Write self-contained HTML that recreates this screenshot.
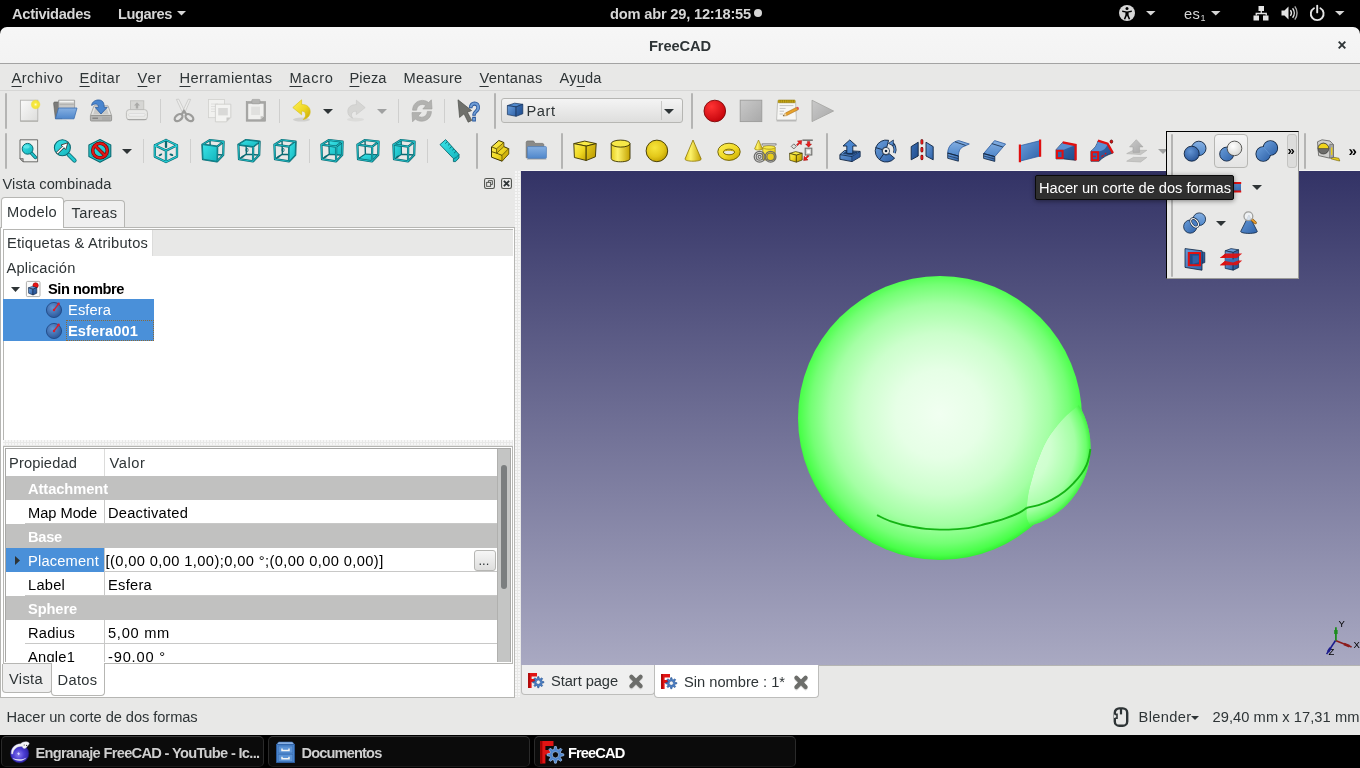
<!DOCTYPE html>
<html lang="es">
<head>
<meta charset="utf-8">
<title>FreeCAD</title>
<style>
*{box-sizing:border-box;margin:0;padding:0}
html,body{width:1360px;height:768px;overflow:hidden;background:#e8e8e7;font-family:"Liberation Sans","DejaVu Sans",sans-serif;font-size:14.67px;color:#2e3436}
.a{position:absolute}
.t{position:absolute;white-space:nowrap;line-height:20px;height:20px}
.b{font-weight:bold}
.w{color:#fff}
u{text-decoration:underline;text-underline-offset:3px;text-decoration-thickness:1px}
svg{position:absolute;overflow:visible}
#topbar{left:0;top:0;width:1360px;height:27px;background:#000;color:#d6d6d6}
#titlebar{left:0;top:27px;width:1360px;height:37px;background:linear-gradient(#f6f6f6,#f3f3f3);border-radius:7px 7px 0 0;border-bottom:1px solid #a3a3a3}
#menubar{left:0;top:64px;width:1360px;height:27px;background:#e8e8e7;border-bottom:1px solid #d6d6d5}
#view3d{left:521px;top:171px;width:839px;height:494px;background:linear-gradient(#333366,#a9a9c2);overflow:hidden}
#taskbar{left:0;top:735px;width:1360px;height:33px;background:#000}
.hdl{position:absolute;width:2px;background:#b4b4b3;border-radius:1px}
.sep{position:absolute;width:1px;background:#cfcfce}
.task{position:absolute;top:1px;height:31px;background:#0b0b0b;border:1px solid #2a2a2a;border-top-color:#3c3c3c;border-bottom-color:#1c1c1c;border-radius:5px}
.dots{background-color:#e8e8e7;background-image:radial-gradient(circle at 1px 1px,#f6f6f6 0.9px,transparent 1.1px);background-size:3px 3px}
#root{position:absolute;left:0;top:0;width:1360px;height:768px;overflow:hidden;will-change:transform}
</style>
</head>
<body>
<div id="root">
<svg width="0" height="0" style="left:0;top:0"><defs>
<linearGradient id="gY" x1="0" y1="0" x2="1" y2="1"><stop offset="0" stop-color="#fdf05a"/><stop offset="0.55" stop-color="#efd823"/><stop offset="1" stop-color="#c6a400"/></linearGradient>
<linearGradient id="gYd" x1="0" y1="0" x2="1" y2="1"><stop offset="0" stop-color="#e8cf1f"/><stop offset="1" stop-color="#b89600"/></linearGradient>
<linearGradient id="gYh" x1="0" y1="0" x2="1" y2="0"><stop offset="0" stop-color="#e6ce20"/><stop offset="0.35" stop-color="#fdf26a"/><stop offset="1" stop-color="#c4a200"/></linearGradient>
<radialGradient id="gYs" cx="0.4" cy="0.35" r="0.7"><stop offset="0" stop-color="#f7e53c"/><stop offset="0.6" stop-color="#e3c81a"/><stop offset="1" stop-color="#bf9e00"/></radialGradient>
<linearGradient id="gB" x1="0" y1="0" x2="1" y2="1"><stop offset="0" stop-color="#6a9edb"/><stop offset="1" stop-color="#2f62a8"/></linearGradient>
<linearGradient id="gBd" x1="0" y1="0" x2="1" y2="1"><stop offset="0" stop-color="#3b70b6"/><stop offset="1" stop-color="#1f4b8a"/></linearGradient>
<linearGradient id="gBl" x1="0" y1="0" x2="0" y2="1"><stop offset="0" stop-color="#86b0e2"/><stop offset="1" stop-color="#4f87cb"/></linearGradient>
<radialGradient id="gBs" cx="0.4" cy="0.35" r="0.75"><stop offset="0" stop-color="#6395d4"/><stop offset="1" stop-color="#234f92"/></radialGradient>
<linearGradient id="gT" x1="0" y1="0" x2="1" y2="1"><stop offset="0" stop-color="#3be4e8"/><stop offset="1" stop-color="#12b4bc"/></linearGradient>
<linearGradient id="gG" x1="0" y1="0" x2="1" y2="1"><stop offset="0" stop-color="#c9c9c9"/><stop offset="1" stop-color="#a9a9a9"/></linearGradient>
<linearGradient id="gP" x1="0" y1="0" x2="1" y2="1"><stop offset="0" stop-color="#fafafa"/><stop offset="1" stop-color="#dddddb"/></linearGradient>
<radialGradient id="gR" cx="0.35" cy="0.3" r="0.8"><stop offset="0" stop-color="#f33"/><stop offset="1" stop-color="#c00008"/></radialGradient>
<radialGradient id="gW" cx="0.4" cy="0.35" r="0.7"><stop offset="0" stop-color="#fff"/><stop offset="1" stop-color="#d6d6d2"/></radialGradient>
<radialGradient id="gStar" cx="0.5" cy="0.5" r="0.5"><stop offset="0" stop-color="#fffbd0"/><stop offset="0.35" stop-color="#f8ea3a"/><stop offset="0.75" stop-color="#f2e024" stop-opacity="0.85"/><stop offset="1" stop-color="#f2e024" stop-opacity="0"/></radialGradient>
<radialGradient id="gWeb" cx="0.45" cy="0.55" r="0.6"><stop offset="0" stop-color="#8a7df0"/><stop offset="0.5" stop-color="#4a3cd2"/><stop offset="1" stop-color="#2a1f9c"/></radialGradient>
</defs></svg>
<div id="topbar" class="a">
<div class="t b" style="left:12px;top:3.9px;letter-spacing:-0.30px">Actividades</div>
<div class="t b" style="left:118px;top:3.9px;letter-spacing:-0.43px">Lugares</div>
<svg style="left:176.9px;top:11.45px" width="9" height="4.5" viewBox="0 0 9 4.5"><path d="M0 0H9L4.5 4.5Z" fill="#d6d6d6"/></svg>
<div class="t b" style="left:610px;top:3.9px;letter-spacing:-0.20px">dom abr 29, 12:18:55</div>
<div class="a" style="left:754px;top:9px;width:8px;height:8px;border-radius:4px;background:#d6d6d6"></div>
<svg style="left:1119px;top:5px" width="16" height="16" viewBox="0 0 16 16"><circle cx="8" cy="8" r="8" fill="#d6d6d6"/>
<circle cx="8" cy="3.600" r="1.500" fill="#000"/>
<path d="M3.200 5.600L8 6.400L12.800 5.600V7L9.600 7.600V10L11.200 14L9.800 14.400L8 10.600L6.200 14.400L4.800 14L6.400 10V7.600L3.200 7Z" fill="#000"/></svg>
<svg style="left:1145.65px;top:11.1px" width="9.5" height="4.6" viewBox="0 0 9.5 4.6"><path d="M0 0H9.5L4.75 4.6Z" fill="#d6d6d6"/></svg>
<div class="t" style="left:1183.9px;top:3.9px;letter-spacing:0.50px">es<span style="font-size:9px;position:relative;top:2px">1</span></div>
<svg style="left:1211.25px;top:11.1px" width="9.5" height="4.6" viewBox="0 0 9.5 4.6"><path d="M0 0H9.5L4.75 4.6Z" fill="#d6d6d6"/></svg>
<svg style="left:1252.5px;top:5px" width="16" height="16" viewBox="0 0 16 16"><rect x="5.500" y="1" width="5.500" height="5" fill="#e4e4e4"/><rect x=".5" y="10.500" width="5.500" height="5" fill="#e4e4e4"/><rect x="10" y="10.500" width="5.500" height="5" fill="#e4e4e4"/>
<path d="M8.250 6V8.500M3.250 10.500V8.500H13.250V10.500" fill="none" stroke="#e4e4e4" stroke-width="1.300"/></svg>
<svg style="left:1280.5px;top:5px" width="16" height="16" viewBox="0 0 16 16"><path d="M.5 5.500H3.500L7.500 1.500V14.500L3.500 10.500H.5Z" fill="#e4e4e4"/>
<path d="M9.400 5.200C10.600 6.800 10.600 9.200 9.400 10.800" fill="none" stroke="#e4e4e4" stroke-width="1.400"/>
<path d="M11.600 3.200C13.800 6 13.800 10 11.600 12.800" fill="none" stroke="#e4e4e4" stroke-width="1.400"/>
<path d="M13.800 1.400C16.800 5.200 16.800 10.800 13.800 14.600" fill="none" stroke="#e4e4e4" stroke-width="1.400" opacity=".75"/></svg>
<svg style="left:1308.5px;top:5px" width="16" height="16" viewBox="0 0 16 16"><path d="M5 3.200A6.400 6.400 0 1 0 11.400 3.200" fill="none" stroke="#e4e4e4" stroke-width="1.900" stroke-linecap="round"/>
<path d="M8.200 .8V7.400" stroke="#e4e4e4" stroke-width="1.900" stroke-linecap="round"/></svg>
<svg style="left:1335.25px;top:11.1px" width="9.5" height="4.6" viewBox="0 0 9.5 4.6"><path d="M0 0H9.5L4.75 4.6Z" fill="#d6d6d6"/></svg>
</div>
<div class="a" style="left:0;top:27px;width:1360px;height:10px;background:#000"></div>
<div id="titlebar" class="a"></div>
<div class="t b" style="left:649px;top:35.9px;letter-spacing:-0.10px">FreeCAD</div>
<svg style="left:1338px;top:41px" width="8" height="8" viewBox="0 0 8 8"><path d="M0.7 0.7L7.3 7.3M7.3 0.7L0.7 7.3" stroke="#2e3436" stroke-width="1.9"/></svg>
<div id="menubar" class="a"></div>
<div class="t" style="left:11.5px;top:68.2px;letter-spacing:0.44px"><u>A</u>rchivo</div>
<div class="t" style="left:79.5px;top:68.2px;letter-spacing:0.45px"><u>E</u>ditar</div>
<div class="t" style="left:137.5px;top:68.2px;letter-spacing:0.90px"><u>V</u>er</div>
<div class="t" style="left:179.5px;top:68.2px;letter-spacing:0.42px"><u>H</u>erramientas</div>
<div class="t" style="left:289.5px;top:68.2px;letter-spacing:0.65px"><u>M</u>acro</div>
<div class="t" style="left:349.5px;top:68.2px;letter-spacing:0.07px"><u>P</u>ieza</div>
<div class="t" style="left:403.5px;top:68.2px;letter-spacing:0.28px">Measure</div>
<div class="t" style="left:479.5px;top:68.2px;letter-spacing:0.23px"><u>V</u>entanas</div>
<div class="t" style="left:559.5px;top:68.2px;letter-spacing:0.14px">Ay<u>u</u>da</div>
<div class="hdl" style="left:5px;top:93px;height:36px"></div>
<svg style="left:17px;top:99px" width="24" height="24" viewBox="0 0 24 24"><rect x="3.2" y="21.3" width="17.8" height="1.6" fill="#9c9c9a" opacity=".7"/>
<rect x="3.4" y="1.2" width="17.4" height="20.6" fill="url(#gP)" stroke="#b2b2b0" stroke-width=".9"/>
<circle cx="18.6" cy="5.5" r="5.2" fill="url(#gStar)"/></svg>
<svg style="left:53px;top:99px" width="24" height="24" viewBox="0 0 24 24"><path d="M0.6 4.2L1.2 3H6.2L7.2 4.6H9V19.6H2.4Z" fill="#7c7c7a" stroke="#5a5a58" stroke-width=".6"/>
<path d="M5.6 1.2H21.6V11H5.6Z" fill="#c9c9c7" stroke="#8e8e8c" stroke-width=".7"/>
<path d="M6.4 2.600H20.800" stroke="#f4f4f2" stroke-width="1.600"/><path d="M6.400 5.400H20.800" stroke="#b4b4b2" stroke-width="1.400"/>
<path d="M5.6 9H24L21 19.8H2.4Z" fill="url(#gBl)" stroke="#3a6db0" stroke-width=".8"/></svg>
<svg style="left:89px;top:99px" width="24" height="24" viewBox="0 0 24 24"><path d="M5 6.8H19L22.6 16.6H1.4Z" fill="#e4e4e2" stroke="#9a9a98" stroke-width=".8"/>
<path d="M6.4 8.5H17.6L19.8 15.2H4.2Z" fill="#c9c9c7"/>
<rect x="1.4" y="16.4" width="21.2" height="5.6" rx="1" fill="#b4b4b2" stroke="#8a8a88" stroke-width=".8"/>
<path d="M3.4 19.2H9" stroke="#7a7a78" stroke-width="1.2"/><path d="M14 18V21M16 18V21M18 18V21M20 18V21" stroke="#a0a09e" stroke-width=".8"/>
<path d="M2.6 6.4C3 2.6 6.8 .6 10.4 1C13.6 1.4 15.2 3.6 15.2 8.4H18.2L12 15L6.2 8.4H9.4C9.6 5.6 7.6 3.6 2.6 6.4Z" fill="#4a86cf" stroke="#2a5a9c" stroke-width=".8"/></svg>
<svg style="left:125px;top:99px" width="24" height="24" viewBox="0 0 24 24"><rect x="5.4" y="1.8" width="13.4" height="10" fill="#d6d6d4" stroke="#bcbcba" stroke-width=".8"/>
<path d="M12 3.2L15 6.6H13.2V9.6H10.8V6.6H9Z" fill="#aaaaa8"/>
<rect x="1.4" y="10.6" width="21" height="10.2" rx="3" fill="#e9e9e7" stroke="#b8b8b6" stroke-width=".9"/>
<rect x="3.6" y="14.8" width="16.6" height="2.2" rx="1.1" fill="#f6f6f6" stroke="#c4c4c2" stroke-width=".5"/>
<path d="M2.6 20.6H21.4" stroke="#a4a4a2" stroke-width="1"/></svg>
<svg style="left:172px;top:99px" width="24" height="24" viewBox="0 0 24 24"><path d="M4.4 .4L6.8 .2L13.4 13.6L11 14.6Z" fill="#ececea" stroke="#c2c2c0" stroke-width=".7"/>
<path d="M18.6 .4L16.4 .2L10 13.6L12.4 14.6Z" fill="#ececea" stroke="#c2c2c0" stroke-width=".7"/>
<ellipse cx="6.6" cy="18.6" rx="4.4" ry="2.8" transform="rotate(-38 6.6 18.6)" fill="none" stroke="#9c9c9a" stroke-width="2.3"/>
<ellipse cx="17.4" cy="18.6" rx="4.4" ry="2.8" transform="rotate(38 17.4 18.6)" fill="none" stroke="#9c9c9a" stroke-width="2.3"/>
<path d="M9.8 15.2L12 12L14.2 15.2" fill="none" stroke="#9c9c9a" stroke-width="2.2"/></svg>
<svg style="left:208px;top:99px" width="24" height="24" viewBox="0 0 24 24"><rect x=".5" y=".5" width="16" height="18.2" fill="#f1f1ef" stroke="#d0d0ce" stroke-width=".8"/>
<path d="M3 5H10M3 7.5H10M3 10H10M3 12.500H7" stroke="#dadad8" stroke-width=".8"/>
<path d="M7.400 5.200H22.800V18.500L18.500 22.800H7.400Z" fill="#f3f3f1" stroke="#cacac8" stroke-width=".8"/>
<rect x="10.200" y="9" width="9.600" height="7.400" fill="#d9d9d7"/>
<path d="M22.800 18.500H18.500V22.800Z" fill="#c8c8c6"/></svg>
<svg style="left:244px;top:99px" width="24" height="24" viewBox="0 0 24 24"><rect x="2.200" y="2.600" width="19.400" height="19.600" fill="#a6a6a4" stroke="#9a9a98" stroke-width=".6"/>
<path d="M4.200 4.800H19.600V17.200L16.600 20.200H4.200Z" fill="#f0f0ee"/>
<rect x="7.200" y="7.600" width="8.800" height="8.400" fill="#e0e0de"/>
<path d="M19.600 17.200H16.600V20.200Z" fill="#c4c4c2"/>
<rect x="7.800" y=".4" width="8.200" height="4.400" rx="1" fill="#b4b4b2" stroke="#9a9a98" stroke-width=".6"/></svg>
<svg style="left:289px;top:99px" width="24" height="24" viewBox="0 0 24 24"><ellipse cx="12.500" cy="20.600" rx="8.500" ry="2" fill="#bcbcba" opacity=".55"/>
<path d="M3.800 8.600L12.600 .8V5.400C18.400 5.400 21.200 8.600 21.200 12.600C21.200 16.600 18.600 19.600 14.200 20.600C16.400 18.400 16.800 16.800 16.400 14.800C16 12.800 14.800 12 12.600 12V15.800Z" fill="url(#gY)" stroke="#d4bc10" stroke-width=".6"/></svg>
<svg style="left:344px;top:99px" width="24" height="24" viewBox="0 0 24 24"><ellipse cx="11.500" cy="20.600" rx="8.500" ry="1.800" fill="#cfcfcd" opacity=".5"/>
<path d="M21.200 8.600L12.400 1.200V5.600C6.600 5.600 3.800 8.600 3.800 12.400C3.800 15.600 5.600 18 8.800 19.200C7.400 17.400 7.200 16 7.800 14.400C8.400 12.800 10 12.200 12.400 12.200V15.600Z" fill="#d6d6d4" stroke="#c6c6c4" stroke-width=".6"/></svg>
<svg style="left:410px;top:99px" width="24" height="24" viewBox="0 0 24 24"><path d="M2.600 11.200C2.600 5.400 7 1.400 12.400 1.400C15 1.400 17 2.200 18.600 3.600L21.400 .8L22 10H12.800L15.800 6.600C14.800 5.800 13.800 5.400 12.400 5.400C9 5.400 6.800 7.800 6.600 11.200Z" fill="#b2b2b0" stroke="#9e9e9c" stroke-width=".6"/>
<path d="M21.400 12.400C21.400 18.200 17 22.200 11.600 22.200C9 22.200 7 21.400 5.400 20L2.600 22.800L2 13.600H11.200L8.200 17C9.200 17.800 10.200 18.200 11.600 18.200C15 18.200 17.200 15.800 17.400 12.400Z" fill="#b2b2b0" stroke="#9e9e9c" stroke-width=".6"/></svg>
<svg style="left:457px;top:99px" width="24" height="24" viewBox="0 0 24 24"><path d="M1 .8L2.600 18.400L7 14.800L11.200 23.200L14.800 21.400L10.400 13.200L14.600 11.600Z" fill="#6f706c" stroke="#4e4f4b" stroke-width=".7"/>
<text x="11.200" y="21.800" font-family="Liberation Sans,sans-serif" font-weight="bold" font-size="28" fill="#6f9dd6" stroke="#2c5a9e" stroke-width="1.100" textLength="12.500" lengthAdjust="spacingAndGlyphs">?</text></svg>
<div class="sep" style="left:160px;top:99px;height:24px"></div>
<div class="sep" style="left:279px;top:99px;height:24px"></div>
<div class="sep" style="left:398px;top:99px;height:24px"></div>
<div class="sep" style="left:444px;top:99px;height:24px"></div>
<svg style="left:323px;top:109px" width="10" height="5" viewBox="0 0 10 5"><path d="M0 0H10L5 5Z" fill="#2e3436"/></svg>
<svg style="left:377px;top:109px" width="10" height="5" viewBox="0 0 10 5"><path d="M0 0H10L5 5Z" fill="#a0a1a1"/></svg>
<div class="hdl" style="left:494px;top:93px;height:36px"></div>
<div class="a" style="left:501px;top:98px;width:182px;height:25px;border:1px solid #b6b6b3;border-radius:3px;background:linear-gradient(#f4f4f4,#dededd)"></div>
<div class="a" style="left:661px;top:101px;width:1px;height:19px;background:#c8c8c6"></div>
<svg style="left:507px;top:102px" width="16" height="16" viewBox="0 0 16 16"><path d="M.4 3.600L7.600 1.200L15.800 2.300L9.100 4.900Z" fill="#4f88cc" stroke="#14305a" stroke-width=".7" stroke-linejoin="round"/>
<path d="M.4 3.600L9.100 4.900V14.300L.4 12.600Z" fill="url(#gB)" stroke="#14305a" stroke-width=".7" stroke-linejoin="round"/>
<path d="M9.100 4.900L15.800 2.300V11.800L9.100 14.300Z" fill="url(#gBd)" stroke="#14305a" stroke-width=".7" stroke-linejoin="round"/></svg>
<div class="t" style="left:526.5px;top:100.9px;letter-spacing:0.53px">Part</div>
<svg style="left:664px;top:109px" width="10" height="5" viewBox="0 0 10 5"><path d="M0 0H10L5 5Z" fill="#2e3436"/></svg>
<div class="hdl" style="left:691px;top:93px;height:36px"></div>
<svg style="left:702px;top:99px" width="24" height="24" viewBox="0 0 24 24"><circle cx="12.800" cy="12" r="10.800" fill="url(#gR)" stroke="#7e0a0a" stroke-width=".9"/></svg>
<svg style="left:739px;top:99px" width="24" height="24" viewBox="0 0 24 24"><rect x="1.200" y="1.200" width="21.600" height="21.400" fill="url(#gG)" stroke="#9c9c9a" stroke-width=".9"/></svg>
<svg style="left:775px;top:99px" width="24" height="24" viewBox="0 0 24 24"><path d="M1.600 21.800H21.400" stroke="#9a9a98" stroke-width="1.200" opacity=".7"/>
<path d="M2.600 3.200H20.600L21.400 21H1.600Z" fill="#f6f6f4" stroke="#b6b6b4" stroke-width=".8"/>
<rect x="3" y="1" width="17.200" height="2.800" rx=".8" fill="#c8a814" stroke="#8f7600" stroke-width=".5"/>
<path d="M5.200 1V3.600M7.400 1V3.600M9.600 1V3.600M11.800 1V3.600M14 1V3.600M16.200 1V3.600M18.400 1V3.600" stroke="#7a6500" stroke-width=".5"/>
<path d="M4.600 6.600H18.400M4.600 9.400H10.600M4.600 12.200H9M4.600 15H8" stroke="#c4c4c2" stroke-width="1"/>
<path d="M8 17L10.400 14L21.400 8.400L23 10.800L11.600 16.600Z" fill="#e8a22a" stroke="#a86a10" stroke-width=".6"/>
<path d="M21.400 8.400L22.800 7.800C23.600 8.200 24 9.200 23.800 10.400L23 10.800Z" fill="#e04a4a"/>
<path d="M8 17L10.400 14L11.600 16.600Z" fill="#e8d4a8"/><path d="M8 17L9 15.800L9.400 16.700Z" fill="#333"/></svg>
<svg style="left:810px;top:99px" width="24" height="24" viewBox="0 0 24 24"><path d="M2 1.200L23.600 12L2 22.600Z" fill="url(#gG)" stroke="#a2a2a0" stroke-width=".8"/></svg>
<div class="hdl" style="left:5px;top:133px;height:36px"></div>
<svg style="left:16px;top:139px" width="24" height="24" viewBox="0 0 24 24"><path d="M4 .8H21.600V22.800H7.200L4 19.600Z" fill="#efefed" stroke="#4c4c4a" stroke-width=".8"/>
<path d="M4 19.600H7.200V22.800Z" fill="#b0b0ae" stroke="#4c4c4a" stroke-width=".6"/>
<path d="M15 13.600L19.400 18.400" stroke="#0a6a72" stroke-width="3.600" stroke-linecap="round"/>
<path d="M15 13.600L19.400 18.400" stroke="#20c3cb" stroke-width="2" stroke-linecap="round"/>
<circle cx="11.600" cy="9.800" r="5.400" fill="url(#gT)" stroke="#0a6a72" stroke-width="1"/>
<ellipse cx="10.600" cy="7.800" rx="3" ry="1.800" fill="#7ff0f2" opacity=".6"/></svg>
<svg style="left:52px;top:139px" width="24" height="24" viewBox="0 0 24 24"><path d="M16.500 15.500L22.500 21.500" stroke="#0a6a72" stroke-width="4.200" stroke-linecap="round"/>
<path d="M16.500 15.500L22.500 21.500" stroke="#22c7cf" stroke-width="2.600" stroke-linecap="round"/>
<circle cx="10.400" cy="8.800" r="8" fill="url(#gT)" stroke="#0a6a72" stroke-width="1.100"/>
<path d="M5 14.200L11.200 8.200L9 6L15.800 3.800L13.800 10.600L11.800 8.600Z" fill="#fff" stroke="#3a3a38" stroke-width=".9" stroke-linejoin="round"/>
<path d="M5 14.200L11.600 7.800" stroke="#3a3a38" stroke-width="2.800"/><path d="M5.200 14L11.800 7.600" stroke="#fff" stroke-width="1.400"/></svg>
<svg style="left:88px;top:139px" width="24" height="24" viewBox="0 0 24 24"><path d="M12 .6L22.800 6V17.600L12 23.200L.9 17.600V6Z" fill="url(#gT)" stroke="#0a6a72" stroke-width="1.100" stroke-linejoin="round"/>
<path d="M12 2.600L20.800 7V16.600L12 21L3 16.600V7Z" fill="none" stroke="#0f8f97" stroke-width=".8"/>
<circle cx="12" cy="11.600" r="7.300" fill="none" stroke="#6a0000" stroke-width="3.400"/>
<path d="M6.800 6.400L17.200 16.800" stroke="#6a0000" stroke-width="3.400"/>
<circle cx="12" cy="11.600" r="7.300" fill="none" stroke="#e01818" stroke-width="2.200"/>
<path d="M6.800 6.400L17.200 16.800" stroke="#e01818" stroke-width="2.200"/></svg>
<svg style="left:154px;top:139px" width="24" height="24" viewBox="0 0 24 24"><g fill="none" stroke-linejoin="round" stroke-linecap="round">
<path d="M12 1L23 6.200V17.600L12 23L.8 17.600V6.200Z M.8 6.200L12 11.600L23 6.200M12 11.600V23M12 1V8" stroke="#0a6a72" stroke-width="2.300"/>
<path d="M12 1L23 6.200V17.600L12 23L.8 17.600V6.200Z M.8 6.200L12 11.600L23 6.200M12 11.600V23" stroke="#25cdd4" stroke-width="1.100"/>
</g>
<ellipse cx="6.400" cy="15.800" rx="2" ry="1" transform="rotate(-28 6.400 15.800)" fill="#0a6a72"/><ellipse cx="17.400" cy="15.800" rx="2" ry="1" transform="rotate(20 17.400 15.800)" fill="#0a6a72"/></svg>
<svg style="left:200px;top:139px" width="24" height="24" viewBox="0 0 24 24"><path d="M10 1L10.4 15.2L23.2 16M10.4 15.2L3 20.2" fill="none" stroke="#0a6a72" stroke-width="1.400" stroke-linejoin="round"/><path d="M2.4 5.6L17.2 7.6L17 22.4L3 20.2ZM2.4 5.6L10 1L23.6 2.6L17.2 7.6M23.6 2.6L23.2 16L17 22.4" fill="none" stroke="#0a6a72" stroke-width="2.200" stroke-linejoin="round"/><path d="M2.4 5.6L17.2 7.6L17 22.4L3 20.2ZM2.4 5.6L10 1L23.6 2.6L17.2 7.6M23.6 2.6L23.2 16L17 22.4" fill="none" stroke="#27ced5" stroke-width=".8" stroke-linejoin="round"/><polygon points="2.4 5.6 17.2 7.6 17 22.4 3 20.2" fill="url(#gT)" stroke="#0a6a72" stroke-width=".8" stroke-linejoin="round"/></svg>
<svg style="left:236px;top:139px" width="24" height="24" viewBox="0 0 24 24"><path d="M10 1L10.4 15.2L23.2 16M10.4 15.2L3 20.2" fill="none" stroke="#0a6a72" stroke-width="1.400" stroke-linejoin="round"/><ellipse cx="6.800" cy="17.600" rx="1.700" ry=".9" transform="rotate(-30 6.800 17.600)" fill="#0a6a72"/><ellipse cx="11" cy="11" rx="1.100" ry="1.800" fill="none" stroke="#0a6a72" stroke-width=".8"/><path d="M2.4 5.6L17.2 7.6L17 22.4L3 20.2ZM2.4 5.6L10 1L23.6 2.6L17.2 7.6M23.6 2.6L23.2 16L17 22.4" fill="none" stroke="#0a6a72" stroke-width="2.200" stroke-linejoin="round"/><path d="M2.4 5.6L17.2 7.6L17 22.4L3 20.2ZM2.4 5.6L10 1L23.6 2.6L17.2 7.6M23.6 2.6L23.2 16L17 22.4" fill="none" stroke="#27ced5" stroke-width=".8" stroke-linejoin="round"/><polygon points="2.4 5.6 10 1 23.6 2.6 17.2 7.6" fill="url(#gT)" stroke="#0a6a72" stroke-width=".8" stroke-linejoin="round"/></svg>
<svg style="left:272px;top:139px" width="24" height="24" viewBox="0 0 24 24"><path d="M10 1L10.4 15.2L23.2 16M10.4 15.2L3 20.2" fill="none" stroke="#0a6a72" stroke-width="1.400" stroke-linejoin="round"/><ellipse cx="6.800" cy="17.600" rx="1.700" ry=".9" transform="rotate(-30 6.800 17.600)" fill="#0a6a72"/><ellipse cx="11" cy="11" rx="1.100" ry="1.800" fill="none" stroke="#0a6a72" stroke-width=".8"/><path d="M2.4 5.6L17.2 7.6L17 22.4L3 20.2ZM2.4 5.6L10 1L23.6 2.6L17.2 7.6M23.6 2.6L23.2 16L17 22.4" fill="none" stroke="#0a6a72" stroke-width="2.200" stroke-linejoin="round"/><path d="M2.4 5.6L17.2 7.6L17 22.4L3 20.2ZM2.4 5.6L10 1L23.6 2.6L17.2 7.6M23.6 2.6L23.2 16L17 22.4" fill="none" stroke="#27ced5" stroke-width=".8" stroke-linejoin="round"/><polygon points="17.2 7.6 23.6 2.6 23.2 16 17 22.4" fill="url(#gT)" stroke="#0a6a72" stroke-width=".8" stroke-linejoin="round"/></svg>
<svg style="left:319px;top:139px" width="24" height="24" viewBox="0 0 24 24"><path d="M10 1L10.4 15.2L23.2 16M10.4 15.2L3 20.2" fill="none" stroke="#0a6a72" stroke-width="1.400" stroke-linejoin="round"/><polygon points="10 1 23.6 2.6 23.2 16 10.4 15.2" fill="url(#gT)" stroke="#0a6a72" stroke-width=".8" stroke-linejoin="round"/><path d="M2.4 5.6L17.2 7.6L17 22.4L3 20.2ZM2.4 5.6L10 1L23.6 2.6L17.2 7.6M23.6 2.6L23.2 16L17 22.4" fill="none" stroke="#0a6a72" stroke-width="2.200" stroke-linejoin="round"/><path d="M2.4 5.6L17.2 7.6L17 22.4L3 20.2ZM2.4 5.6L10 1L23.6 2.6L17.2 7.6M23.6 2.6L23.2 16L17 22.4" fill="none" stroke="#27ced5" stroke-width=".8" stroke-linejoin="round"/><ellipse cx="6.800" cy="17.600" rx="1.700" ry=".9" transform="rotate(-30 6.800 17.600)" fill="#0a6a72"/></svg>
<svg style="left:355px;top:139px" width="24" height="24" viewBox="0 0 24 24"><path d="M10 1L10.4 15.2L23.2 16M10.4 15.2L3 20.2" fill="none" stroke="#0a6a72" stroke-width="1.400" stroke-linejoin="round"/><polygon points="3 20.2 17 22.4 23.2 16 10.4 15.2" fill="url(#gT)" stroke="#0a6a72" stroke-width=".8" stroke-linejoin="round"/><path d="M2.4 5.6L17.2 7.6L17 22.4L3 20.2ZM2.4 5.6L10 1L23.6 2.6L17.2 7.6M23.6 2.6L23.2 16L17 22.4" fill="none" stroke="#0a6a72" stroke-width="2.200" stroke-linejoin="round"/><path d="M2.4 5.6L17.2 7.6L17 22.4L3 20.2ZM2.4 5.6L10 1L23.6 2.6L17.2 7.6M23.6 2.6L23.2 16L17 22.4" fill="none" stroke="#27ced5" stroke-width=".8" stroke-linejoin="round"/></svg>
<svg style="left:391px;top:139px" width="24" height="24" viewBox="0 0 24 24"><path d="M10 1L10.4 15.2L23.2 16M10.4 15.2L3 20.2" fill="none" stroke="#0a6a72" stroke-width="1.400" stroke-linejoin="round"/><polygon points="2.4 5.6 10 1 10.4 15.2 3 20.2" fill="url(#gT)" stroke="#0a6a72" stroke-width=".8" stroke-linejoin="round"/><path d="M2.4 5.6L17.2 7.6L17 22.4L3 20.2ZM2.4 5.6L10 1L23.6 2.6L17.2 7.6M23.6 2.6L23.2 16L17 22.4" fill="none" stroke="#0a6a72" stroke-width="2.200" stroke-linejoin="round"/><path d="M2.4 5.6L17.2 7.6L17 22.4L3 20.2ZM2.4 5.6L10 1L23.6 2.6L17.2 7.6M23.6 2.6L23.2 16L17 22.4" fill="none" stroke="#27ced5" stroke-width=".8" stroke-linejoin="round"/><ellipse cx="6.800" cy="17.600" rx="1.700" ry=".9" transform="rotate(-30 6.800 17.600)" fill="#0a6a72"/></svg>
<svg style="left:438px;top:139px" width="24" height="24" viewBox="0 0 24 24"><path d="M2 5.600L7.600 .6L21 15.400V19L17.600 22.600H15.400V19.600Z" fill="url(#gT)" stroke="#0a6a72" stroke-width=".9" stroke-linejoin="round"/>
<path d="M15.400 19.600C17.400 19.400 19.600 17.600 21 15.400" fill="none" stroke="#0a6a72" stroke-width=".8"/>
<path d="M9.400 2.600L7.200 4.600M11.600 5L10 6.400M13.800 7.400L11.600 9.400M16 9.800L14.400 11.200M18.200 12.200L16 14.200" stroke="#0a6a72" stroke-width=".9"/></svg>
<svg style="left:488px;top:139px" width="24" height="24" viewBox="0 0 24 24"><path d="M3.500 7.900L10.800 1.500L15.800 3.500V7.600L20.700 9.700V14.900L14.100 22.200L3.500 18.200Z" fill="url(#gY)" stroke="#3a3200" stroke-width="1" stroke-linejoin="round"/>
<path d="M3.500 7.900L8.600 9.800L15.800 3.500M8.600 9.800V14.200L3.500 12.600M8.600 14.200L14.100 16.400L20.700 9.700M14.100 16.400V22.200M8.600 14.200L15.800 7.600" fill="none" stroke="#3a3200" stroke-width=".8" stroke-linejoin="round"/>
<path d="M8.600 9.800L15.800 3.500V7.600L8.600 14.200Z" fill="#c9aa08" opacity=".55"/><path d="M14.100 16.400L20.700 9.700V14.900L14.100 22.200Z" fill="#c9aa08" opacity=".55"/></svg>
<svg style="left:523.5px;top:139px" width="24" height="24" viewBox="0 0 24 24"><path d="M2.200 3.400C2.200 2.600 2.800 2 3.600 2H9.600L11 4.400H18.400C19.200 4.400 19.800 5 19.800 5.800V18.800H2.200Z" fill="#8a8a88" stroke="#6e6e6c" stroke-width=".7"/>
<rect x="3.400" y="7.600" width="19" height="11.800" rx=".8" fill="url(#gBl)" stroke="#4a7ab8" stroke-width=".7"/>
<path d="M3 20.200H22.400" stroke="#7a7a78" stroke-width=".8" opacity=".6"/></svg>
<svg style="left:573px;top:139px" width="24" height="24" viewBox="0 0 24 24"><path d="M.8 4.600L11.700 2.100L23.200 4.600L13.200 7.100Z" fill="#f8ea45" stroke="#3a3200" stroke-width=".9" stroke-linejoin="round"/>
<path d="M.8 4.600L13.200 7.100V21.500L1.400 18.500Z" fill="url(#gY)" stroke="#3a3200" stroke-width=".9" stroke-linejoin="round"/>
<path d="M13.200 7.100L23.200 4.600L22.400 17.800L13.200 21.500Z" fill="url(#gYd)" stroke="#3a3200" stroke-width=".9" stroke-linejoin="round"/></svg>
<svg style="left:609px;top:139px" width="24" height="24" viewBox="0 0 24 24"><path d="M2.200 4.600V19.400C2.200 21.400 6.400 22.800 11.600 22.800C16.800 22.800 21 21.400 21 19.400V4.600Z" fill="url(#gYh)" stroke="#3a3200" stroke-width=".9"/>
<ellipse cx="11.600" cy="4.600" rx="9.400" ry="3.500" fill="#f6e848" stroke="#3a3200" stroke-width=".9"/></svg>
<svg style="left:645px;top:139px" width="24" height="24" viewBox="0 0 24 24"><circle cx="11.900" cy="11.900" r="10.800" fill="url(#gYs)" stroke="#3a3200" stroke-width=".9"/></svg>
<svg style="left:681px;top:139px" width="24" height="24" viewBox="0 0 24 24"><path d="M12 1L20.200 20C20.200 21.400 16.600 22.200 12.100 22.200C7.600 22.200 4 21.400 4 20Z" fill="url(#gYh)" stroke="#8a7400" stroke-width=".8" stroke-linejoin="round"/></svg>
<svg style="left:717px;top:139px" width="24" height="24" viewBox="0 0 24 24"><ellipse cx="12" cy="12.800" rx="11.200" ry="8.600" fill="url(#gY)" stroke="#6a5a00" stroke-width=".9"/>
<ellipse cx="12" cy="13" rx="5.600" ry="2.800" fill="#e8e8e7" stroke="#6a5a00" stroke-width=".9"/>
<path d="M6.600 12.600C8 10.800 16 10.800 17.400 12.600" fill="none" stroke="#bfa000" stroke-width="1"/></svg>
<svg style="left:753px;top:139px" width="24" height="24" viewBox="0 0 24 24"><rect x="9.800" y="8" width="12.400" height="13" rx="1" fill="url(#gY)" stroke="#8a7400" stroke-width=".7"/>
<ellipse cx="16" cy="8.400" rx="6.200" ry="1.800" fill="#f6e848" stroke="#8a7400" stroke-width=".6"/>
<path d="M5.500 1L9.600 9.800C9.600 10.600 7.800 11 5.600 11C3.400 11 1.600 10.600 1.600 9.800Z" fill="url(#gYh)" stroke="#8a7400" stroke-width=".6"/>
<path d="M9.600 5.400H22.600" stroke="#8c8c8a" stroke-width="2.200" stroke-linecap="round"/><path d="M9.800 5.400H22.400" stroke="#c8c8c6" stroke-width=".9"/>
<circle cx="17.600" cy="17.800" r="3.600" fill="#e8cc18"/>
<g fill="none" stroke="#6c6c6a" stroke-width="1.200"><circle cx="6.600" cy="17.800" r="5.400"/><circle cx="6.600" cy="17.800" r="3.400"/><circle cx="6.600" cy="17.800" r="1.500"/><circle cx="17.600" cy="17.800" r="5.400"/><circle cx="17.600" cy="17.800" r="3.800"/></g></svg>
<svg style="left:789px;top:139px" width="24" height="24" viewBox="0 0 24 24"><path d="M.6 14.400L6.600 12.600L13.200 14.200L7.400 16.200Z" fill="#f8ea45" stroke="#3a3200" stroke-width=".7" stroke-linejoin="round"/>
<path d="M.6 14.400L7.400 16.200V23.200L.8 21.200Z" fill="url(#gY)" stroke="#3a3200" stroke-width=".7" stroke-linejoin="round"/>
<path d="M7.400 16.200L13.200 14.200V21L7.400 23.200Z" fill="url(#gYd)" stroke="#3a3200" stroke-width=".7" stroke-linejoin="round"/>
<path d="M13.400 1.200H23.800" stroke="#6e6e6c" stroke-width="1.500"/>
<rect x="3" y="5.600" width="3.600" height="3.600" transform="rotate(45 4.800 7.400)" fill="#e0e0de" stroke="#6e6e6c" stroke-width=".9"/>
<rect x="16.200" y="9.200" width="6.600" height="6.800" fill="#d4d4d2" stroke="#6e6e6c" stroke-width="1.100"/><rect x="18.200" y="11.200" width="2.600" height="2.800" fill="#fff"/>
<path d="M18.400 2.400H20.800V5H22.600L19.600 8.200L16.600 5H18.400Z" fill="#ee1c1c" stroke="#8a0000" stroke-width=".4"/>
<path d="M7.400 5.800L9.800 3.400L8.400 2L12.800 1.400L12.200 5.800L10.800 4.400L8.400 6.800Z" fill="#ee1c1c" stroke="#8a0000" stroke-width=".4"/>
<path d="M20 17.200L17.600 19.600L19 21L14.600 21.600L15.200 17.200L16.600 18.600L19 16.200Z" fill="#ee1c1c" stroke="#8a0000" stroke-width=".4"/></svg>
<svg style="left:837.5px;top:139px" width="24" height="24" viewBox="0 0 24 24"><path d="M1.900 15.600L6.600 11.500L22.100 12.400V17.800L14 22.600L1.900 20.300Z" fill="url(#gB)" stroke="#10243f" stroke-width=".9" stroke-linejoin="round"/>
<path d="M1.900 15.600L14 17.600L22.100 12.400M14 17.600V22.600" fill="none" stroke="#10243f" stroke-width=".8"/>
<path d="M5.400 14.600L8 12.600L19 13.200L14.200 16Z" fill="#1f4b8a" stroke="#10243f" stroke-width=".5"/>
<path d="M14 17.600L22.100 12.400V17.800L14 22.600Z" fill="#244f90" opacity=".7"/>
<path d="M11.800 .9L18.600 7H14.800V14.400H8.800V7H5Z" fill="#4a86cf" stroke="#10243f" stroke-width=".9" stroke-linejoin="round"/></svg>
<svg style="left:874px;top:139px" width="24" height="24" viewBox="0 0 24 24"><path d="M12 12L20.600 19.200A11 11 0 1 1 14.600 1.300L12.800 8.200A3.900 3.900 0 1 0 15 14.600Z" fill="url(#gB)" stroke="#10243f" stroke-width=".9" stroke-linejoin="round"/>
<path d="M8.400 10.600L1.600 8.600M9.600 15L5.600 20.800" stroke="#10243f" stroke-width=".9"/>
<circle cx="12" cy="12" r="3.600" fill="#f2f2f0" stroke="#10243f" stroke-width=".8"/><circle cx="12" cy="12" r="1.300" fill="#10243f"/>
<path d="M17 3.600C20.600 5.600 22 10.400 20.400 14" fill="none" stroke="#10243f" stroke-width="3"/><path d="M17 3.600C20.600 5.600 22 10.400 20.400 14" fill="none" stroke="#5a90d2" stroke-width="1.500"/>
<path d="M14.400 4.400L19.400 1L19.200 6.800Z" fill="#5a90d2" stroke="#10243f" stroke-width=".7"/></svg>
<svg style="left:910px;top:139px" width="24" height="24" viewBox="0 0 24 24"><path d="M1.200 7.600L8.200 3.200V17L1.200 20.800Z" fill="url(#gBd)" stroke="#10243f" stroke-width=".9" stroke-linejoin="round"/>
<path d="M16 3.200L23.200 7.600V20.800L16 17Z" fill="url(#gB)" stroke="#10243f" stroke-width=".9" stroke-linejoin="round"/>
<path d="M11.900 1.600V22.800" stroke="#5a0000" stroke-width="2.800" stroke-dasharray="2.600 5.200" stroke-linecap="round"/>
<path d="M11.900 1.600V22.800" stroke="#e81a1a" stroke-width="1.700" stroke-dasharray="2.600 5.200" stroke-linecap="round"/></svg>
<svg style="left:945.5px;top:139px" width="24" height="24" viewBox="0 0 24 24"><path d="M12.700 1.600L23.300 5L18.400 7.200C14.600 8.400 12.600 11.400 12.400 17L1.700 14.100C1.800 7.200 6.400 2.800 12.700 1.600Z" fill="url(#gBl)" stroke="#2c5a9e" stroke-width=".8" stroke-linejoin="round"/>
<path d="M1.700 14.100L12.400 17V22.200L1.700 19.300Z" fill="url(#gB)" stroke="#10243f" stroke-width=".8" stroke-linejoin="round"/>
<path d="M1.700 14.100L12.400 17M9 2.800L19.600 6.400" fill="none" stroke="#10243f" stroke-width=".8"/>
<path d="M1.900 16.800L12.300 19.600" stroke="#10243f" stroke-width=".6"/></svg>
<svg style="left:982px;top:139px" width="24" height="24" viewBox="0 0 24 24"><path d="M12.600 1.600L23.600 5L12.800 17.600L1.600 14.600Z" fill="url(#gBl)" stroke="#2c5a9e" stroke-width=".8" stroke-linejoin="round"/>
<path d="M1.600 14.600L12.800 17.600V22.400L1.600 19.400Z" fill="url(#gB)" stroke="#10243f" stroke-width=".8" stroke-linejoin="round"/>
<path d="M1.600 14.600L12.800 17.600M9.800 4.600L20.800 8" fill="none" stroke="#10243f" stroke-width=".8"/>
<path d="M1.800 17L12.700 20" stroke="#10243f" stroke-width=".6"/></svg>
<svg style="left:1018px;top:139px" width="24" height="24" viewBox="0 0 24 24"><path d="M1.700 6.800L22.300 1.600V17L1.700 22.200Z" fill="url(#gB)" stroke="#2c5a9e" stroke-width=".7"/>
<path d="M1.900 5.600V23.200M22.100 .6V17.800" stroke="#e01010" stroke-width="2.200"/></svg>
<svg style="left:1054px;top:139px" width="24" height="24" viewBox="0 0 24 24"><path d="M2 10.800L8.700 3.400L21.600 6V21.300L9.600 19.900L2 19.900Z" fill="url(#gBd)" stroke="#10243f" stroke-width=".7" stroke-linejoin="round"/>
<path d="M2 10.800L8.700 3.400L21.600 6L9.600 10.800Z" fill="#5a90d2"/>
<path d="M8.700 3.400L21.600 6V21.300" fill="none" stroke="#e01010" stroke-width="2.300" stroke-linejoin="miter"/>
<rect x="3" y="11.800" width="5.600" height="7.200" fill="#2f62a8" stroke="#e01010" stroke-width="2"/></svg>
<svg style="left:1090px;top:139px" width="24" height="24" viewBox="0 0 24 24"><path d="M8 1.700L17.600 4.600L22.900 14.100C17.600 15.600 12.400 18.600 9 22.200L.9 22.200V12.200C4.600 9.600 7 6.200 8 1.700Z" fill="url(#gBd)" stroke="#10243f" stroke-width=".7" stroke-linejoin="round"/>
<path d="M8 1.700L17.600 4.600C16.600 9.200 13.600 11.800 9 12.400L.9 12.200C4.600 9.600 7 6.200 8 1.700Z" fill="#5a90d2"/>
<path d="M8 1.700L17.600 4.600L22.900 14.100" fill="none" stroke="#e01010" stroke-width="2.300"/>
<rect x="1.900" y="13.200" width="6.200" height="8" fill="#2f62a8" stroke="#e01010" stroke-width="2"/>
<path d="M3 17.400H6" stroke="#e01010" stroke-width="1.600"/>
<path d="M11.400 17.600C13.400 16.600 15 15.400 16.200 13.800" stroke="#e01010" stroke-width="1.200" stroke-dasharray="2.400 1.600" fill="none"/>
<ellipse cx="21.400" cy="2.600" rx="1.300" ry="1.600" fill="#e01010" stroke="#5a0000" stroke-width=".8"/></svg>
<svg style="left:1125px;top:139px" width="24" height="24" viewBox="0 0 24 24"><path d="M1.700 14.600L8.400 11.300H21.800L15.600 15.600Z" fill="#c6c6c4" stroke="#aeaeac" stroke-width=".6"/>
<path d="M1.700 22.200L8.400 18.400H21.800L15.600 23Z" fill="#c6c6c4" stroke="#aeaeac" stroke-width=".6"/>
<path d="M11.300 .7L18 7.900H14.600V13.400H8V7.900H4.600Z" fill="url(#gG)" stroke="#a6a6a4" stroke-width=".6"/></svg>
<svg style="left:122px;top:149px" width="10" height="5" viewBox="0 0 10 5"><path d="M0 0H10L5 5Z" fill="#2e3436"/></svg>
<svg style="left:1158px;top:149px" width="10" height="5" viewBox="0 0 10 5"><path d="M0 0H10L5 5Z" fill="#a0a1a1"/></svg>
<div class="sep" style="left:143px;top:139px;height:24px"></div>
<div class="sep" style="left:190px;top:139px;height:24px"></div>
<div class="sep" style="left:309px;top:139px;height:24px"></div>
<div class="sep" style="left:427px;top:139px;height:24px"></div>
<div class="hdl" style="left:476px;top:133px;height:36px"></div>
<div class="hdl" style="left:561px;top:133px;height:36px"></div>
<div class="hdl" style="left:826px;top:133px;height:36px"></div>
<div class="hdl" style="left:1304px;top:133px;height:36px"></div>
<svg style="left:1315.5px;top:139px" width="24" height="24" viewBox="0 0 24 24"><path d="M15 17.800L22.800 19.200L23.800 22L21.600 21.600L15 19.800Z" fill="#e8cc18" stroke="#6a5a00" stroke-width=".6"/>
<path d="M1.500 2.800L6 .8L14 2L17.400 5.600V18.400L13 19L2.600 16.600Z" fill="#d0d0ce" stroke="#5c5c5a" stroke-width=".8" stroke-linejoin="round"/>
<path d="M13.800 5.200L17.400 5.600V18.400L13.600 19Z" fill="#a8a8a6" stroke="#5c5c5a" stroke-width=".6"/>
<path d="M15 8.600H16.400V16H15Z" fill="#e8cc18"/>
<circle cx="7.400" cy="9.600" r="5.400" fill="#6c6c6a" stroke="#3a3a38" stroke-width=".7"/>
<path d="M2 9.600A5.400 5.400 0 0 1 12.800 9.600Z" fill="#f0d41c" stroke="#3a3a38" stroke-width=".6"/></svg>
<div class="t b" style="left:1348.5px;top:140.8px;font-size:15px;color:#000">»</div>
<div class="t" style="left:2.5px;top:173.9px;letter-spacing:0.06px">Vista combinada</div>
<svg style="left:484px;top:178px" width="11" height="11" viewBox="0 0 10 10"><rect x=".5" y=".5" width="9" height="9" rx="1.500" fill="none" stroke="#555753" stroke-width="1"/>
<rect x="2.400" y="4" width="3.600" height="3.600" fill="none" stroke="#555753" stroke-width=".9"/><path d="M4 4V2.400H7.600V6H6" fill="none" stroke="#555753" stroke-width=".9"/></svg>
<svg style="left:501px;top:178px" width="11" height="11" viewBox="0 0 10 10"><rect x=".5" y=".5" width="9" height="9" rx="1.500" fill="none" stroke="#555753" stroke-width="1"/>
<path d="M2.600 2.600L7.400 7.400M7.400 2.600L2.600 7.400" stroke="#2e3436" stroke-width="1.700"/></svg>
<div class="a" style="left:0;top:227px;width:515px;height:471px;background:#fff;border:1px solid #b6b6b3"></div>
<div class="a" style="left:63px;top:200px;width:62px;height:27px;background:#efefef;border:1px solid #b6b6b3;border-bottom:none;border-radius:4px 4px 0 0"></div>
<div class="a" style="left:1px;top:197px;width:63px;height:31px;background:#fff;border:1px solid #b6b6b3;border-bottom:none;border-radius:4px 4px 0 0"></div>
<div class="t" style="left:7px;top:201.9px;letter-spacing:0.32px">Modelo</div>
<div class="t" style="left:71.5px;top:202.9px;letter-spacing:0.33px">Tareas</div>
<div class="a" style="left:3px;top:229px;width:510px;height:211px;border:1px solid #b6b6b3;border-right:none;border-bottom:none"></div>
<div class="a" style="left:4px;top:230px;width:509px;height:26px;background:#e8e8e7"></div>
<div class="a" style="left:4px;top:230px;width:149px;height:26px;background:#fff;border-right:1px solid #dcdcdb"></div>
<div class="t" style="left:7px;top:233.4px;letter-spacing:0.24px">Etiquetas &amp; Atributos</div>
<div class="t" style="left:6.5px;top:257.9px;letter-spacing:0.22px">Aplicación</div>
<svg style="left:10.5px;top:287px" width="9" height="5" viewBox="0 0 9 5"><path d="M0 0H9L4.5 5Z" fill="#2e3436"/></svg>
<svg style="left:26px;top:280.5px" width="16" height="16" viewBox="0 0 16 16"><rect x=".4" y=".4" width="13.600" height="15.200" rx="1.200" fill="#fbfbfb" stroke="#9a9a98" stroke-width=".8"/>
<circle cx="9.600" cy="4.400" r="2.700" fill="#e81414" stroke="#8a0000" stroke-width=".5"/>
<path d="M2.400 6.800L6.600 5.400L10.800 6.600L7 8.200Z" fill="#6a9edb" stroke="#10243f" stroke-width=".6" stroke-linejoin="round"/>
<path d="M2.400 6.800L7 8.200V14L2.600 12.200Z" fill="url(#gB)" stroke="#10243f" stroke-width=".6" stroke-linejoin="round"/>
<path d="M7 8.200L10.800 6.600V12.200L7 14Z" fill="url(#gBd)" stroke="#10243f" stroke-width=".6" stroke-linejoin="round"/></svg>
<div class="t b" style="left:48px;top:278.9px;color:#000;letter-spacing:-0.46px">Sin nombre</div>
<div class="a" style="left:3px;top:299px;width:151px;height:42px;background:#4a90d9"></div>
<div class="a" style="left:66px;top:320px;width:88px;height:21px;border:1px dotted #8a6a3a"></div>
<svg style="left:46px;top:301.5px" width="16" height="16" viewBox="0 0 16 16"><circle cx="8" cy="8" r="7.600" fill="url(#gBs)" stroke="#1d4480" stroke-width=".8"/>
<path d="M8 8L12.600 1.800" stroke="#d81e2c" stroke-width="1.300"/><circle cx="8" cy="8" r="1.200" fill="#d81e2c"/><circle cx="12.600" cy="1.900" r="1.300" fill="#d81e2c"/></svg>
<svg style="left:46px;top:322.5px" width="16" height="16" viewBox="0 0 16 16"><circle cx="8" cy="8" r="7.600" fill="url(#gBs)" stroke="#1d4480" stroke-width=".8"/>
<path d="M8 8L12.600 1.800" stroke="#d81e2c" stroke-width="1.300"/><circle cx="8" cy="8" r="1.200" fill="#d81e2c"/><circle cx="12.600" cy="1.900" r="1.300" fill="#d81e2c"/></svg>
<div class="t w" style="left:68px;top:299.9px;letter-spacing:0.11px">Esfera</div>
<div class="t b w" style="left:68px;top:320.9px;letter-spacing:0.08px">Esfera001</div>
<div class="a dots" style="left:3px;top:440px;width:510px;height:6px"></div>
<div class="a" style="left:3px;top:446px;width:510px;height:218px;border:1px solid #b6b6b3;background:#fff"></div>
<div class="a" style="left:5px;top:448px;width:506px;height:214px;border:1px solid #a8a8a6;border-bottom:none;overflow:hidden" id="prop">
</div>
<div class="a" style="left:6px;top:449px;width:491px;height:213px;overflow:hidden">
<div class="a" style="left:98px;top:0;width:1px;height:27px;background:#dcdcdb"></div>
<div class="a" style="left:0;top:27px;width:491px;height:24px;background:#c1c1c0"></div>
<div class="a" style="left:19px;top:74px;width:472px;height:1px;background:#c8c8c7"></div>
<div class="a" style="left:98px;top:51px;width:1px;height:24px;background:#c8c8c7"></div>
<div class="a" style="left:0;top:75px;width:491px;height:24px;background:#c1c1c0"></div>
<div class="a" style="left:19px;top:122px;width:472px;height:1px;background:#c8c8c7"></div>
<div class="a" style="left:98px;top:99px;width:1px;height:24px;background:#c8c8c7"></div>
<div class="a" style="left:0;top:99px;width:98px;height:24px;background:#4a90d9"></div>
<div class="a" style="left:19px;top:146px;width:472px;height:1px;background:#c8c8c7"></div>
<div class="a" style="left:98px;top:123px;width:1px;height:24px;background:#c8c8c7"></div>
<div class="a" style="left:0;top:147px;width:491px;height:24px;background:#c1c1c0"></div>
<div class="a" style="left:19px;top:194px;width:472px;height:1px;background:#c8c8c7"></div>
<div class="a" style="left:98px;top:171px;width:1px;height:24px;background:#c8c8c7"></div>
<div class="a" style="left:19px;top:218px;width:472px;height:1px;background:#c8c8c7"></div>
<div class="a" style="left:98px;top:195px;width:1px;height:24px;background:#c8c8c7"></div>
</div>
<div class="t" style="left:9px;top:453.2px;letter-spacing:0.13px">Propiedad</div>
<div class="t" style="left:109.5px;top:453.2px;letter-spacing:0.57px">Valor</div>
<div class="t b w" style="left:28px;top:479.2px;letter-spacing:-0.06px">Attachment</div>
<div class="t" style="left:28px;top:503.2px;color:#000;letter-spacing:-0.03px">Map Mode</div>
<div class="t" style="left:108px;top:503.2px;color:#000;letter-spacing:0.24px">Deactivated</div>
<div class="t b w" style="left:28px;top:527.2px;letter-spacing:-0.26px">Base</div>
<div class="t w" style="left:28px;top:551.2px;letter-spacing:0.19px">Placement</div>
<div class="t" style="left:105.5px;top:551.2px;color:#000;letter-spacing:0.39px">[(0,00 0,00 1,00);0,00 °;(0,00 0,00 0,00)]</div>
<div class="t" style="left:28px;top:575.2px;color:#000;letter-spacing:0.23px">Label</div>
<div class="t" style="left:108px;top:575.2px;color:#000;letter-spacing:0.27px">Esfera</div>
<div class="t b w" style="left:28px;top:599.2px;letter-spacing:-0.11px">Sphere</div>
<div class="t" style="left:28px;top:623.2px;color:#000;letter-spacing:0.23px">Radius</div>
<div class="t" style="left:108px;top:623.2px;color:#000;letter-spacing:0.71px">5,00 mm</div>
<div class="a" style="left:6px;top:644px;width:491px;height:18px;overflow:hidden">
<div class="t" style="left:22px;top:3.2px;color:#000;letter-spacing:0.23px">Angle1</div>
<div class="t" style="left:102px;top:3.2px;color:#000;letter-spacing:0.81px">-90.00 °</div>
</div>
<svg style="left:15px;top:556px" width="5" height="9" viewBox="0 0 5 9"><path d="M0 0L5 4.5L0 9Z" fill="#2e3436"/></svg>
<div class="a" style="left:474px;top:550px;width:22px;height:21px;border:1px solid #b6b6b3;border-radius:3px;background:linear-gradient(#f6f6f6,#dededd)"></div>
<div class="t" style="left:478.5px;top:550.5px;font-size:13px;color:#2e3436">...</div>
<div class="a" style="left:497px;top:449px;width:13px;height:213px;background:#c4c5c4;border-left:1px solid #b0b0ae"></div>
<div class="a" style="left:501px;top:465px;width:6px;height:124px;background:#7b7e7f;border-radius:3px"></div>
<div class="a" style="left:2px;top:664px;width:50px;height:29px;background:#efefef;border:1px solid #b6b6b3;border-top:none;border-radius:0 0 4px 4px"></div>
<div class="a" style="left:51px;top:663px;width:54px;height:33px;background:#fff;border:1px solid #b6b6b3;border-top:none;border-radius:0 0 4px 4px"></div>
<div class="t" style="left:9px;top:669.4px;letter-spacing:0.33px">Vista</div>
<div class="t" style="left:57.5px;top:669.9px;letter-spacing:0.34px">Datos</div>
<div class="a dots" style="left:515px;top:171px;width:6px;height:526px"></div>
<div class="a" style="left:521px;top:170px;width:839px;height:1px;background:#f4f4f3"></div>
<div id="view3d" class="a">
<svg style="left:0;top:0" width="839" height="494" viewBox="521 171 839 494">
<defs>
<radialGradient id="sg" gradientUnits="userSpaceOnUse" cx="940" cy="414" r="147">
<stop offset="0" stop-color="#f1fff1"/><stop offset="0.3" stop-color="#e6ffe6"/><stop offset="0.55" stop-color="#ccffcc"/><stop offset="0.75" stop-color="#a4ffa4"/><stop offset="0.88" stop-color="#74ff74"/><stop offset="0.96" stop-color="#48ff48"/><stop offset="1" stop-color="#2eea2e"/>
</radialGradient>
<radialGradient id="sg2" gradientUnits="userSpaceOnUse" cx="1009" cy="447" r="83">
<stop offset="0" stop-color="#f1fff1"/><stop offset="0.5" stop-color="#dcffdc"/><stop offset="0.8" stop-color="#acffac"/><stop offset="0.93" stop-color="#6cff6c"/><stop offset="1" stop-color="#2eea2e"/>
</radialGradient>
<linearGradient id="lg" gradientUnits="userSpaceOnUse" x1="1030" y1="450" x2="1085" y2="470"><stop offset="0" stop-color="#eaffea" stop-opacity=".85"/><stop offset="1" stop-color="#c8ffc8" stop-opacity=".1"/></linearGradient>
<clipPath id="c1"><circle cx="940" cy="418" r="142"/></clipPath>
<clipPath id="c2"><circle cx="1009" cy="447" r="81.500"/></clipPath>
</defs>
<circle cx="940" cy="418" r="142" fill="url(#sg)"/>
<g clip-path="url(#c2)"><path d="M1080 404C1077.0 406.7 1067.5 414.0 1062 420C1056.5 426.0 1051.1 433.0 1047 440C1042.9 447.0 1039.8 455.6 1037.3 462.1C1034.8 468.6 1033.5 473.6 1032 479C1030.5 484.4 1029.0 489.9 1028.2 494.7C1027.4 499.5 1027.1 503.8 1026.9 507.7C1026.7 511.6 1026.2 515.0 1026.9 518C1027.6 521.0 1030.3 524.7 1031 526L1100 540L1100 400Z" fill="#5cff5c"/><path d="M1080 404C1077.0 406.7 1067.5 414.0 1062 420C1056.5 426.0 1051.1 433.0 1047 440C1042.9 447.0 1039.8 455.6 1037.3 462.1C1034.8 468.6 1033.5 473.6 1032 479C1030.5 484.4 1029.0 489.9 1028.2 494.7C1027.4 499.5 1027.1 503.8 1026.9 507.7C1026.7 511.6 1026.2 515.0 1026.9 518C1027.6 521.0 1030.3 524.7 1031 526L1100 540L1100 400Z" fill="url(#sg2)" opacity=".9"/></g>
<path d="M877 515.2C879.3 516.2 886.9 519.9 890.9 521.4C894.9 522.9 897.8 523.6 901.2 524.5C904.6 525.4 907.4 525.9 911.5 526.6C915.6 527.3 920.2 528.4 925.9 528.9C931.6 529.4 939.3 529.6 945.5 529.6C951.7 529.6 958.4 529.0 963 528.6C967.6 528.2 969.8 527.8 973.2 527.1C976.6 526.4 980.1 525.4 983.5 524.5C986.9 523.6 990.0 523.0 993.8 521.9C997.5 520.8 1001.8 519.6 1006 518.1C1010.2 516.6 1015.5 514.6 1019 512.9C1022.5 511.2 1025.6 508.6 1026.9 507.7" fill="none" stroke="#14b414" stroke-width="1.900"/><path d="M1026.9 507.7C1028.9 507.3 1034.5 506.4 1038.6 505.1C1042.7 503.8 1047.3 502.2 1051.6 499.9C1055.9 497.6 1060.9 494.2 1064.6 491.4C1068.3 488.6 1070.9 485.9 1073.7 483C1076.5 480.1 1079.3 476.9 1081.5 473.8C1083.7 470.8 1085.4 467.7 1086.7 464.7C1088.0 461.7 1088.7 458.2 1089.3 455.6C1089.9 453.0 1090.2 450.1 1090.4 449" fill="none" stroke="#14b414" stroke-width="1.900"/>
<g font-family="Liberation Sans,sans-serif" font-size="9.500" fill="#000"><text x="1338.500" y="627">Y</text><text x="1353.500" y="648">X</text><text x="1328.500" y="655">Z</text></g>
<path d="M1335.500 640.500L1351.600 647.100" stroke="#8c1c1c" stroke-width="1.600"/><path d="M1344 644L1349.500 646.200" stroke="#8c1c1c" stroke-width="2.600"/>
<path d="M1335.500 640.500L1326.600 654.100" stroke="#1c1c8c" stroke-width="1.600"/><path d="M1330.500 648L1328 652" stroke="#1c1c8c" stroke-width="2.600"/>
<path d="M1335.900 640.500V627.200" stroke="#1c8c1c" stroke-width="1.800"/><path d="M1335.900 634V630" stroke="#1c8c1c" stroke-width="3.400"/>
</svg>
</div>

<div class="a" style="left:521px;top:665px;width:839px;height:1px;background:#b4b4b2"></div>
<div class="a" style="left:521px;top:665px;width:134px;height:30px;background:#efefef;border:1px solid #bdbdbb;border-top:none;border-radius:0 0 4px 4px"></div>
<div class="a" style="left:654px;top:665px;width:165px;height:33px;background:#fff;border:1px solid #bdbdbb;border-top:none;border-radius:0 0 4px 4px"></div>
<svg style="left:528px;top:672.5px" width="16" height="16" viewBox="0 0 16 16"><path d="M.2 0H9V3.400H3.600V6H7V9H3.600V15H.2Z" fill="#e01414"/><path d="M.2 0H1.600V15H.2Z" fill="#a00000"/>
<path d="M9.74 3.63L10.86 3.63L11.32 5.64L12.09 5.96L13.84 4.86L14.64 5.66L13.54 7.41L13.86 8.18L15.87 8.64L15.87 9.76L13.86 10.22L13.54 10.99L14.64 12.74L13.84 13.54L12.09 12.44L11.32 12.76L10.86 14.77L9.74 14.77L9.28 12.76L8.51 12.44L6.76 13.54L5.96 12.74L7.06 10.99L6.74 10.22L4.73 9.76L4.73 8.64L6.74 8.18L7.06 7.41L5.96 5.66L6.76 4.86L8.51 5.96L9.28 5.64Z" fill="#4a7fc6" stroke="#1f4b8a" stroke-width=".6" stroke-linejoin="round"/>
<circle cx="10.300" cy="9.200" r="2.100" fill="#f4f4f4" stroke="#1f4b8a" stroke-width=".5"/></svg>
<svg style="left:661px;top:673.5px" width="16" height="16" viewBox="0 0 16 16"><path d="M.2 0H9V3.400H3.600V6H7V9H3.600V15H.2Z" fill="#e01414"/><path d="M.2 0H1.600V15H.2Z" fill="#a00000"/>
<path d="M9.74 3.63L10.86 3.63L11.32 5.64L12.09 5.96L13.84 4.86L14.64 5.66L13.54 7.41L13.86 8.18L15.87 8.64L15.87 9.76L13.86 10.22L13.54 10.99L14.64 12.74L13.84 13.54L12.09 12.44L11.32 12.76L10.86 14.77L9.74 14.77L9.28 12.76L8.51 12.44L6.76 13.54L5.96 12.74L7.06 10.99L6.74 10.22L4.73 9.76L4.73 8.64L6.74 8.18L7.06 7.41L5.96 5.66L6.76 4.86L8.51 5.96L9.28 5.64Z" fill="#4a7fc6" stroke="#1f4b8a" stroke-width=".6" stroke-linejoin="round"/>
<circle cx="10.300" cy="9.200" r="2.100" fill="#f4f4f4" stroke="#1f4b8a" stroke-width=".5"/></svg>
<div class="t" style="left:551px;top:670.9px;letter-spacing:-0.06px">Start page</div>
<div class="t" style="left:684px;top:671.9px">Sin nombre : 1*</div>
<svg style="left:628px;top:673px" width="16" height="16" viewBox="0 0 16 16"><path d="M3.400 5L12.600 14.200M12.600 5L3.400 14.200" stroke="#b8b8b6" stroke-width="4.200" stroke-linecap="round" opacity=".55"/>
<path d="M3.400 3.800L12.600 13M12.600 3.800L3.400 13" stroke="#6c6d6a" stroke-width="4.200" stroke-linecap="round"/></svg>
<svg style="left:793px;top:674px" width="16" height="16" viewBox="0 0 16 16"><path d="M3.400 5L12.600 14.200M12.600 5L3.400 14.200" stroke="#b8b8b6" stroke-width="4.200" stroke-linecap="round" opacity=".55"/>
<path d="M3.400 3.800L12.600 13M12.600 3.800L3.400 13" stroke="#6c6d6a" stroke-width="4.200" stroke-linecap="round"/></svg>
<div class="t" style="left:6.5px;top:706.9px;letter-spacing:-0.07px">Hacer un corte de dos formas</div>
<svg style="left:1111px;top:706.5px" width="20" height="20" viewBox="0 0 20 20"><rect x="3.800" y="1.400" width="12.400" height="17.400" rx="4.400" fill="none" stroke="#2e3436" stroke-width="2.400"/>
<path d="M10 1.400V7.400" stroke="#2e3436" stroke-width="2.200"/><path d="M3 7.600H5.600V11H3" fill="#e8e8e7" stroke="none"/><path d="M3.800 7.400H6V11.200H3.800" fill="none" stroke="#2e3436" stroke-width="1.600"/></svg>
<div class="t" style="left:1138.5px;top:706.9px;letter-spacing:0.35px">Blender</div>
<svg style="left:1191px;top:716px" width="8" height="4" viewBox="0 0 8 4"><path d="M0 0H8L4 4Z" fill="#2e3436"/></svg>
<div class="t" style="left:1212.5px;top:706.9px;letter-spacing:0.06px">29,40 mm x 17,31 mm</div>
<div class="a" style="left:1166px;top:131px;width:133px;height:148px;background:#e8e8e7;border:1px solid #000;border-right-color:#9a9a98;border-bottom-color:#9a9a98"></div>
<div class="hdl" style="left:1171px;top:134px;height:143px"></div>
<div class="a" style="left:1214px;top:134px;width:34px;height:34px;border:1px solid #b6b6b3;border-radius:4px;background:linear-gradient(#f4f4f4,#e4e4e3)"></div>
<div class="a" style="left:1287px;top:134px;width:10px;height:34px;border:1px solid #c4c4c2;border-radius:3px;background:#dcdcdb"></div>
<div class="t b" style="left:1287.5px;top:141.0px;font-size:13px;color:#000">»</div>
<svg style="left:1182.5px;top:139px" width="24" height="24" viewBox="0 0 24 24"><circle cx="15.800" cy="9.400" r="7.200" fill="url(#gBl)" stroke="#10243f" stroke-width=".9"/>
<circle cx="8.700" cy="14.700" r="7.500" fill="url(#gBs)" stroke="#10243f" stroke-width=".9"/></svg>
<svg style="left:1219px;top:139px" width="24" height="24" viewBox="0 0 24 24"><circle cx="7.700" cy="15.100" r="7" fill="url(#gB)" stroke="#10243f" stroke-width=".9"/>
<circle cx="15.500" cy="9.400" r="7.300" fill="url(#gW)" stroke="#4a4a48" stroke-width=".9"/></svg>
<svg style="left:1255px;top:139px" width="24" height="24" viewBox="0 0 24 24"><circle cx="15.400" cy="9" r="6.900" fill="#4c82c6" stroke="#10243f" stroke-width="1.700"/><circle cx="8.200" cy="15" r="6.900" fill="#4c82c6" stroke="#10243f" stroke-width="1.700"/>
<circle cx="15.400" cy="9" r="6.900" fill="url(#gB)"/><circle cx="8.200" cy="15" r="6.900" fill="url(#gB)"/>
<path d="M8.600 8.200L15 15.800" stroke="#6a9edb" stroke-width=".8" opacity=".8"/></svg>
<svg style="left:1219px;top:175px" width="24" height="24" viewBox="0 0 24 24"><rect x="14" y="7.600" width="8" height="9" fill="url(#gB)"/><path d="M13 8H22.200M13 16.600H22.200" stroke="#e01010" stroke-width="2"/></svg>
<svg style="left:1252px;top:185px" width="10" height="5" viewBox="0 0 10 5"><path d="M0 0H10L5 5Z" fill="#2e3436"/></svg>
<svg style="left:1182.5px;top:211px" width="24" height="24" viewBox="0 0 24 24"><circle cx="16.300" cy="8.200" r="6.300" fill="url(#gBl)" stroke="#10243f" stroke-width=".8"/>
<circle cx="7.200" cy="15.600" r="6.600" fill="url(#gB)" stroke="#10243f" stroke-width=".8"/>
<ellipse cx="11.600" cy="11.800" rx="4.800" ry="3.100" transform="rotate(52 11.600 11.800)" fill="#4a7fc4" stroke="#10243f" stroke-width="2.500"/>
<ellipse cx="11.600" cy="11.800" rx="4.800" ry="3.100" transform="rotate(52 11.600 11.800)" fill="none" stroke="#f4f4f2" stroke-width="1.300"/></svg>
<svg style="left:1216px;top:221px" width="10" height="5" viewBox="0 0 10 5"><path d="M0 0H10L5 5Z" fill="#2e3436"/></svg>
<svg style="left:1237px;top:211px" width="24" height="24" viewBox="0 0 24 24"><path d="M11.900 4L20.300 20.400C20.300 21.600 16.600 22.400 12 22.400C7.400 22.400 3.700 21.600 3.700 20.400Z" fill="url(#gB)" stroke="#10243f" stroke-width=".8" stroke-linejoin="round"/>
<path d="M14.600 8.400L18.400 11.800" stroke="#8a5a10" stroke-width="2.800" stroke-linecap="round"/><path d="M14.600 8.400L18.400 11.800" stroke="#f0a030" stroke-width="1.500" stroke-linecap="round"/>
<circle cx="11.400" cy="5.200" r="4.400" fill="#eef2f6" fill-opacity=".85" stroke="#a0a09e" stroke-width="1.300"/></svg>
<svg style="left:1183px;top:247px" width="24" height="24" viewBox="0 0 24 24"><path d="M14.600 4.200L21.800 5.400V15.600L14.600 17.800Z" fill="url(#gBd)" stroke="#10243f" stroke-width=".7" stroke-linejoin="round"/>
<path d="M2 1.600L19 3.800V23.200L2 20.400Z" fill="url(#gB)" stroke="#10243f" stroke-width=".8" stroke-linejoin="round"/>
<rect x="5.800" y="6" width="11.200" height="12.200" fill="#1f4b8a" stroke="#e01010" stroke-width="2"/>
<path d="M9.600 8.600H15.800V15.200L9.600 17Z" fill="#2f62a8"/></svg>
<svg style="left:1219px;top:247px" width="24" height="24" viewBox="0 0 24 24"><path d="M.9 11L6.600 6.400H11V11Z" fill="#e01010"/><path d="M.9 18.200L6.600 13.400H11V18.200Z" fill="#e01010"/>
<path d="M6.200 3.800L12 1.600L19.600 2.800L14.200 5.400Z" fill="#6a9edb" stroke="#10243f" stroke-width=".7" stroke-linejoin="round"/>
<path d="M6.200 3.800L14.200 5.400V23.200L6.200 21.400Z" fill="url(#gB)" stroke="#10243f" stroke-width=".7" stroke-linejoin="round"/>
<path d="M14.200 5.400L19.600 2.800V20.600L14.200 23.200Z" fill="url(#gBd)" stroke="#10243f" stroke-width=".7" stroke-linejoin="round"/>
<path d="M.9 11L6.600 6.400H23.200L17.800 11Z" fill="#e01010" opacity=".92"/><path d="M.9 18.200L6.600 13.400H23.200L17.800 18.200Z" fill="#e01010" opacity=".92"/>
<path d="M6.200 11.200L14.200 12.600L19.600 10.400V13.200L14.200 15.400L6.200 14Z" fill="#3b70b6"/></svg>
<div class="a" style="left:1035px;top:175px;width:199px;height:25px;background:#2f2f2f;border:1px solid #0a0a0a;border-radius:2px;box-shadow:0 1px 5px rgba(0,0,0,.45)"></div>
<div class="t" style="left:1039px;top:177.9px;color:#fff;letter-spacing:-0.04px">Hacer un corte de dos formas</div>
<div id="taskbar" class="a">
<div class="task" style="left:1px;width:263px"></div><div class="task" style="left:268px;width:262px"></div><div class="task" style="left:534px;width:262px"></div>
</div>
<svg style="left:9px;top:741px" width="22" height="22" viewBox="0 0 22 22"><circle cx="10.600" cy="12.600" r="9.200" fill="url(#gWeb)" stroke="#221a80" stroke-width=".6"/>
<path d="M3.400 17C6.600 20.600 14 21 17.600 16.400C13.600 18.800 8 18.800 3.400 17Z" fill="#f2f2fa" opacity=".9"/>
<path d="M9.400 11.200L11 12.800L9.600 14.200L8.200 12.600Z" fill="#dcd8ff"/>
<path d="M2.600 13C1.600 8 5.600 3 11.600 2.800C13 1.200 16 .2 18.600 1C20.200 1.400 20.800 2.800 19.600 3.800C18.400 5 17.600 6.800 16 7.400C14.600 7.800 13.800 7 13.200 5.600C8.600 4.600 4.200 8 3.800 13Z" fill="#f4f4f8" stroke="#c8c8d8" stroke-width=".4"/>
<circle cx="15.200" cy="4" r=".6" fill="#333"/><circle cx="17.600" cy="4.400" r=".6" fill="#333"/></svg>
<svg style="left:275px;top:741px" width="22" height="22" viewBox="0 0 22 22"><path d="M1.600 3.400L3.600 1H17.400L19.400 3.400Z" fill="#8db4e6" stroke="#3a6db0" stroke-width=".6"/>
<rect x="1.600" y="3.400" width="17.800" height="18.200" fill="#4a86cf" stroke="#2f62a8" stroke-width=".8"/>
<rect x="3.200" y="5" width="14.600" height="7" fill="#5b93d6" stroke="#3a6db0" stroke-width=".6"/><rect x="3.200" y="13.400" width="14.600" height="7" fill="#5b93d6" stroke="#3a6db0" stroke-width=".6"/>
<path d="M7 7.400V9.400H14V7.400" fill="none" stroke="#f4f4f2" stroke-width="1.500"/><path d="M7 15.800V17.800H14V15.800" fill="none" stroke="#f4f4f2" stroke-width="1.500"/></svg>
<svg style="left:540px;top:741px" width="24" height="24" viewBox="0 0 16 16"><path d="M.2 0H9V3.400H3.600V6H7V9H3.600V15H.2Z" fill="#e01414"/><path d="M.2 0H1.600V15H.2Z" fill="#a00000"/>
<path d="M9.74 3.63L10.86 3.63L11.32 5.64L12.09 5.96L13.84 4.86L14.64 5.66L13.54 7.41L13.86 8.18L15.87 8.64L15.87 9.76L13.86 10.22L13.54 10.99L14.64 12.74L13.84 13.54L12.09 12.44L11.32 12.76L10.86 14.77L9.74 14.77L9.28 12.76L8.51 12.44L6.76 13.54L5.96 12.74L7.06 10.99L6.74 10.22L4.73 9.76L4.73 8.64L6.74 8.18L7.06 7.41L5.96 5.66L6.76 4.86L8.51 5.96L9.28 5.64Z" fill="#4f86cf" stroke="#9fc0ea" stroke-width=".5" stroke-linejoin="round"/>
<circle cx="10.300" cy="9.200" r="2.100" fill="#0b0b0b" stroke="#9fc0ea" stroke-width=".5"/></svg>
<div class="t b" style="left:35.5px;top:742.9px;color:#cfcfcf;letter-spacing:-0.70px">Engranaje FreeCAD - YouTube - Ic...</div>
<div class="t b" style="left:301.5px;top:742.9px;color:#cfcfcf;letter-spacing:-0.88px">Documentos</div>
<div class="t b" style="left:568px;top:742.9px;color:#fff;letter-spacing:-0.90px">FreeCAD</div>
</div>
</body>
</html>
